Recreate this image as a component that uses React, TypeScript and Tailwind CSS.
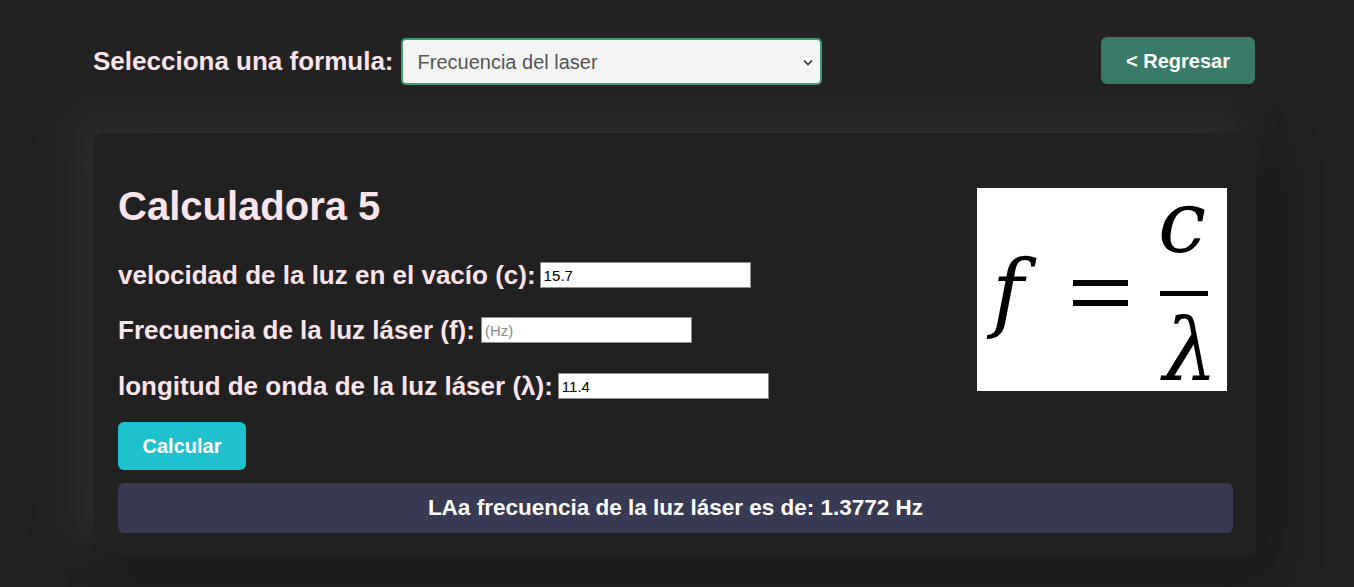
import React from "react";

export default function App() {
  const font = { fontFamily: '"Liberation Sans", Arial, sans-serif' };
  const math = { fontFamily: '"DejaVu Serif", serif' };
  return (
    <div className="min-h-[587px] w-full bg-[#222222] pt-[37px] pb-[30px]" style={font}>
      <div className="mx-[93px] w-[1164px]">
        <div className="flex items-center justify-between">
          <div className="flex items-center">
            <span className="text-[26px] font-bold text-[#fce4ec] mr-[7px]">Selecciona una formula:</span>
            <div className="relative w-[421px] h-[47px] mt-[1px] rounded-[5px] border-2 border-[#3f9a72] bg-[#f4f4f4] flex items-center">
              <span className="pl-[15px] text-[20px] text-[#555555]">Frecuencia del laser</span>
              <svg className="absolute right-[7px] top-[19px]" width="10" height="7" viewBox="0 0 10 7">
                <path d="M1 1.5 L5 5.5 L9 1.5" fill="none" stroke="#333" strokeWidth="1.6" />
              </svg>
            </div>
          </div>
          <button className="mr-[2px] mb-[1px] w-[154px] h-[47px] rounded-[6px] bg-[#3a7a68] text-white text-[20px] font-bold">
            &lt; Regresar
          </button>
        </div>

        <div className="mt-[48px] w-[1164px] rounded-[10px] bg-[#212121] pt-[55px] px-[25px] pb-[24px] shadow-[-18px_-18px_40px_#2c2c2c,18px_18px_40px_#1a1a1a]">
          <div className="flex justify-between">
            <div className="flex flex-col">
              <h2 className="text-[40px] leading-[36px] font-bold text-[#fce4ec]">Calculadora 5</h2>
              <div className="flex items-center mt-[38px] h-[26px]">
                <span className="text-[26px] leading-[26px] font-bold text-[#fce4ec] mr-[4px]">velocidad de la luz en el vacío (c):</span>
                <input className="w-[211px] h-[26px] bg-white border border-[#8a8a8a] px-[3px] text-[15px] text-black outline-none" defaultValue="15.7" style={font} />
              </div>
              <div className="flex items-center mt-[29px] h-[26px]">
                <span className="text-[26px] leading-[26px] font-bold text-[#fce4ec] mr-[6px]">Frecuencia de la luz láser (f):</span>
                <input className="w-[211px] h-[26px] bg-white border border-[#8a8a8a] px-[3px] text-[15px] text-black outline-none placeholder:text-[#8a8a8a]" placeholder="(Hz)" style={font} />
              </div>
              <div className="flex items-center mt-[30px] h-[26px]">
                <span className="text-[26px] leading-[26px] font-bold text-[#fce4ec] mr-[5px]">longitud de onda de la luz láser (λ):</span>
                <input className="w-[211px] h-[26px] bg-white border border-[#8a8a8a] px-[3px] text-[15px] text-black outline-none" defaultValue="11.4" style={font} />
              </div>
            </div>
            <div className="relative w-[250px] h-[203px] bg-white mr-[5px]">
              <span className="absolute left-[15px] top-[60px] text-[86px] leading-none italic text-black" style={math}>f</span>
              <div className="absolute left-[96px] top-[92px] w-[55px] h-[6px] bg-black" />
              <div className="absolute left-[96px] top-[112px] w-[55px] h-[6px] bg-black" />
              <span className="absolute left-[181px] top-[-9px] text-[86px] leading-none italic text-black" style={math}>c</span>
              <div className="absolute left-[183px] top-[103px] w-[48px] h-[5px] bg-black" />
              <span className="absolute left-[186px] top-[119px] text-[86px] leading-none italic text-black" style={math}>λ</span>
            </div>
          </div>
          <button className="mt-[23px] w-[128px] h-[48px] rounded-[6px] bg-[#1fc1cf] text-white text-[20px] font-bold">
            Calcular
          </button>
          <div className="mt-[13px] mr-[-1px] h-[50px] rounded-[6px] bg-[#373a52] flex items-center justify-center">
            <span className="text-[22.5px] font-bold text-white">LAa frecuencia de la luz láser es de: 1.3772 Hz</span>
          </div>
        </div>
      </div>
    </div>
  );
}
